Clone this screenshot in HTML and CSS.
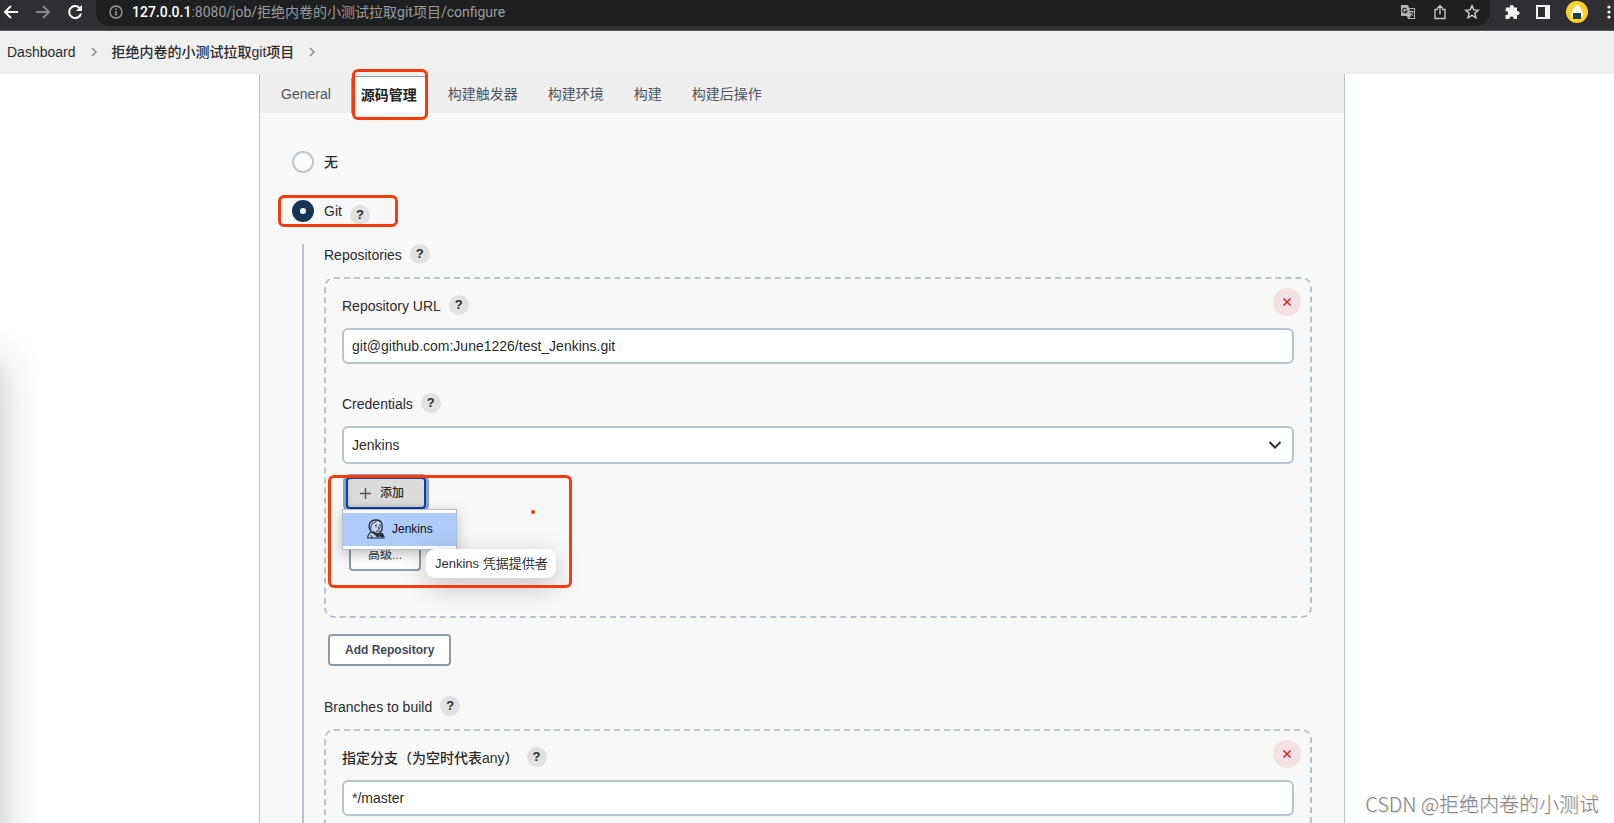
FILE: index.html
```html
<!DOCTYPE html>
<html lang="zh-CN">
<head>
<meta charset="utf-8">
<title>拒绝内卷的小测试拉取git项目 Config [Jenkins]</title>
<link rel="stylesheet" href="styles.css">
</head>
<body>
<header class="browser">
  <div class="nav">
    <button class="tool" aria-label="Back"><svg width="16" height="16" viewBox="0 0 16 16"><path d="M15 8H2M8 2L2 8l6 6" fill="none" stroke="#fff" stroke-width="2"/></svg></button>
    <button class="tool" aria-label="Forward"><svg width="16" height="16" viewBox="0 0 16 16"><path d="M1 8h13M8 2l6 6-6 6" fill="none" stroke="#85858a" stroke-width="2"/></svg></button>
    <button class="tool" aria-label="Reload"><svg width="16" height="16" viewBox="0 0 16 16"><path d="M13 4.500A6 6 0 1 0 14 9.500" fill="none" stroke="#fff" stroke-width="2"/><path d="M15 1v6H9z" fill="#fff"/></svg></button>
  </div>
  <div class="omnibox">
    <svg width="14" height="14" viewBox="0 0 14 14"><circle cx="7" cy="7" r="6" fill="none" stroke="#9aa0a6" stroke-width="1.400"/><path d="M7 6v4.500M7 3.500v1.500" stroke="#9aa0a6" stroke-width="1.500"/></svg>
    <span class="url"><b>127.0.0.1</b>:8080/job/拒绝内卷的小测试拉取git项目/configure</span>
    <div class="page-actions">
      <button class="tool" aria-label="Translate"><svg width="16" height="16" viewBox="0 0 16 16"><path d="M1 1h7l1 3h6v11H8l-1-3H1z" fill="#b4b4b6"/><path d="M9.500 5H14v9H9l2-2z" fill="#1e1f21"/><path d="M6.500 5A2.200 2.200 0 1 0 7 7H5" fill="none" stroke="#1e1f21" stroke-width="1.200"/><path d="M9.500 7.500h4M11.500 6.500v1M13 7.500c-.5 2-2 3.500-3 4M10.500 9l2.500 3" fill="none" stroke="#b4b4b6"/></svg></button>
      <button class="tool" aria-label="Share"><svg width="16" height="16" viewBox="0 0 16 16"><path d="M6 5.500H3v9h10v-9h-3M8 10.500V1.500M5 4.500l3-3 3 3" fill="none" stroke="#c2c2c4" stroke-width="1.400"/></svg></button>
      <button class="tool" aria-label="Bookmark"><svg width="16" height="16" viewBox="0 0 16 16"><path d="M8 1.700l1.800 4.200 4.600.4-3.500 3 1.100 4.500L8 11.400l-4 2.400 1.100-4.500-3.500-3 4.600-.4z" fill="none" stroke="#d0d0d2" stroke-width="1.400"/></svg></button>
    </div>
  </div>
  <div class="extras">
    <button class="tool" aria-label="Extensions"><svg width="16" height="16" viewBox="0 0 16 16"><path d="M2 3.500h4a2 2 0 1 1 3.800 0H13v3.700a2 2 0 1 1 0 3.800v4H9.500a2 2 0 1 0-3.800 0H1.500v-4a2 2 0 1 0 0-3.800z" fill="#f4f4f5"/></svg></button>
    <button class="tool" aria-label="Side panel"><svg width="16" height="16" viewBox="0 0 16 16"><path d="M1 1h14v14H1zM3 3v10h7V3z" fill="#f4f4f5" fill-rule="evenodd"/></svg></button>
    <button class="tool" aria-label="Profile"><svg width="22" height="22" viewBox="0 0 22 22"><circle cx="11" cy="11" r="11" fill="#fdd22b"/><path d="M11 4c1.500 0 2.300 1 3 2.500l2.700 5.500c1 2-.2 4-2 4H7.300c-1.800 0-3-2-2-4L8 6.500C8.700 5 9.500 4 11 4z" fill="#fff"/><path d="M7 12h8v6H7z" fill="#1d4440"/></svg></button>
    <button class="tool" aria-label="Menu"><svg width="16" height="16" viewBox="0 0 16 16"><g fill="#f4f4f5"><circle cx="8" cy="3" r="1.600"/><circle cx="8" cy="8" r="1.600"/><circle cx="8" cy="13" r="1.600"/></g></svg></button>
  </div>
</header>

<nav class="breadcrumbs" aria-label="Breadcrumb">
  <a href="#">Dashboard</a>
  <svg width="8" height="12" viewBox="0 0 8 12"><path d="M2 2l4 4-4 4" fill="none" stroke="#8c8c8c" stroke-width="1.500"/></svg>
  <a href="#">拒绝内卷的小测试拉取git项目</a>
  <svg width="8" height="12" viewBox="0 0 8 12"><path d="M2 2l4 4-4 4" fill="none" stroke="#8c8c8c" stroke-width="1.500"/></svg>
</nav>

<main class="page">
  <div class="edge-shadow"></div>
  <div class="panel">
    <nav class="tabs">
      <a class="tab" href="#general">General</a>
      <a class="tab active" href="#scm">源码管理<span class="mark mark-tab"></span></a>
      <a class="tab" href="#triggers">构建触发器</a>
      <a class="tab" href="#env">构建环境</a>
      <a class="tab" href="#build">构建</a>
      <a class="tab" href="#post">构建后操作</a>
    </nav>

    <form class="config" id="scm">
      <div class="choice">
        <input type="radio" name="scm" id="scm-none"><label for="scm-none">无</label>
      </div>
      <div class="choice">
        <input type="radio" name="scm" id="scm-git" checked><label for="scm-git">Git</label>
        <button type="button" class="help help-low" aria-label="Help: Git">?</button>
        <span class="mark mark-git"></span>
      </div>

      <section class="git">
        <div class="caption"><span>Repositories</span><button type="button" class="help" aria-label="Help: Repositories">?</button></div>
        <div class="chunk">
          <button type="button" class="delete" aria-label="Delete repository"><svg width="10" height="10" viewBox="0 0 10 10"><path d="M1.500 1.500l7 7M8.500 1.500l-7 7" stroke="#d8232a" stroke-width="1.500"/></svg></button>
          <div class="field">
            <div class="caption"><label for="repo-url">Repository URL</label><button type="button" class="help" aria-label="Help: Repository URL">?</button></div>
            <input class="text" type="text" id="repo-url" value="git@github.com:June1226/test_Jenkins.git">
          </div>
          <div class="field">
            <div class="caption"><label for="credentials">Credentials</label><button type="button" class="help" aria-label="Help: Credentials">?</button></div>
            <div class="select-wrap">
              <select id="credentials"><option>Jenkins</option></select>
              <svg class="chevron" width="14" height="10" viewBox="0 0 14 10"><path d="M1.500 2L7 7.500 12.500 2" fill="none" stroke="#333" stroke-width="2"/></svg>
            </div>
          </div>
          <div class="credential-actions">
            <button type="button" class="add"><svg width="11" height="11" viewBox="0 0 11 11"><path d="M5.500 0v11M0 5.500h11" stroke="#555" stroke-width="1.500"/></svg>添加</button>
            <div class="menu">
              <button type="button" class="menu-item">
                <svg width="18" height="20" viewBox="0 0 18 20"><path d="M4.500 13C2.500 11 1.500 8 2.500 5 3.500 2 6 1 9 1s5.500 1.500 6 4.500c.6 3.500 0 7-2.500 8.500-2 1.200-5 .5-6.500-1.500" fill="#c3d6f3" stroke="#222c3c" stroke-width="1.300"/><path d="M3 8c1.500-.5 2-2 2-3.500C7 4 9 3 9.500 2M4.500 8.500c-1.500 0-1.500 2 .3 2.500M8 6.500l2-.5M12 6l2 .4M11.500 7.500l1 2.500-1.500.2M9 12c1.500.5 2.500.3 3.500-.3M8.500 8h1M13 8h1" fill="none" stroke="#222c3c"/><path d="M5 13c-2 .5-4 2-4.400 6H17c0-2.500-1-4-3.500-5l-4 2.500z" fill="#b9cdec" stroke="#222c3c" stroke-width="1.200"/><path d="M10 15l2.500 1.200 3-1.700v3.500l-3-1-2.500 1.200zM3.500 16l2 3" fill="#222c3c" stroke="#222c3c"/></svg>
                Jenkins
              </button>
            </div>
            <button type="button" class="btn advanced">高级...</button>
            <div class="tooltip" role="tooltip">Jenkins 凭据提供者</div>
            <span class="mark mark-add"></span>
            <span class="mark-dot"></span>
          </div>
        </div>
        <button type="button" class="btn add-repo">Add Repository</button>

        <div class="caption"><span>Branches to build</span><button type="button" class="help" aria-label="Help: Branches to build">?</button></div>
        <div class="chunk">
          <button type="button" class="delete" aria-label="Delete branch"><svg width="10" height="10" viewBox="0 0 10 10"><path d="M1.500 1.500l7 7M8.500 1.500l-7 7" stroke="#d8232a" stroke-width="1.500"/></svg></button>
          <div class="field">
            <div class="caption"><label for="branch">指定分支（为空时代表any）</label><button type="button" class="help" aria-label="Help: branch">?</button></div>
            <input class="text" type="text" id="branch" value="*/master">
          </div>
        </div>
      </section>
    </form>
  </div>
  <div class="watermark">CSDN @拒绝内卷的小测试</div>
</main>
</body>
</html>
```
FILE: styles.css
```css
* { box-sizing: border-box; }

body {
  margin: 0;
  height: 100vh;
  overflow: hidden;
  display: flex;
  flex-direction: column;
  background: #fff;
  color: #2b2b2b;
  font: 14px/20px "Liberation Sans", "Noto Sans CJK SC", sans-serif;
}

button, input, select { font: inherit; color: inherit; margin: 0; }
button { cursor: pointer; }
a { color: inherit; text-decoration: none; }
svg { display: block; flex: none; }

/* Browser toolbar */
.browser {
  flex: none;
  height: 31px;
  display: flex;
  align-items: flex-start;
  background: #2f2e33;
  border-bottom: 1px solid #59585d;
}
.tool { display: flex; align-items: center; height: 24px; padding: 0; border: 0; background: none; }
.nav { display: flex; gap: 16px; padding: 0 13px 0 3px; }
.omnibox {
  flex: 1;
  display: flex;
  align-items: center;
  gap: 9px;
  height: 26px;
  padding: 0 10px 2px 13px;
  background: #1e1f21;
  border-radius: 0 0 14px 14px;
}
.url { flex: 1; color: #9a9b9e; font-family: Roboto, "Noto Sans CJK SC", sans-serif; }
.url b { color: #fff; font-weight: 500; }
.page-actions { display: flex; gap: 16px; }
.extras { display: flex; align-items: center; gap: 15px; padding-left: 14px; margin-right: -3px; }
.extras .tool { min-width: 16px; }
.extras .tool:last-child { margin-left: -2px; }

/* Breadcrumbs */
.breadcrumbs {
  flex: none;
  height: 43px;
  display: flex;
  align-items: center;
  gap: 14px;
  padding: 0 7px 2px;
  background: #f0f0f0;
  font-weight: 500;
}

/* Page */
.page { position: relative; flex: 1; min-height: 0; padding: 0 269px 0 259px; }
.edge-shadow {
  position: absolute;
  left: -120px;
  top: 288px;
  bottom: -80px;
  width: 120px;
  box-shadow: 0 0 40px rgba(0, 0, 0, 0.25);
}
.panel {
  min-height: 100%;
  background: #f8f8f8;
  border: solid #b9c3cc;
  border-width: 0 1px;
}
.tabs { display: flex; height: 39px; padding-left: 6px; background: #efefef; color: #4d545d; }
.tab { padding: 10px 15px; }
.tab.active {
  position: relative;
  margin: 2px 6px 0 5px;
  padding: 8px 9px;
  background: #fff;
  border: solid #8f9ba6;
  border-width: 1px 1px 0;
  border-radius: 4px 4px 0 0;
  color: #222;
  font-weight: 700;
}

/* Form */
.config { padding: 38px 32px 0; }
.choice { position: relative; display: flex; align-items: center; height: 22px; font-weight: 500; }
.choice + .choice { margin-top: 27px; }
.choice input {
  appearance: none;
  width: 22px;
  height: 22px;
  margin-right: 10px;
  border: 2px solid #bfc9d1;
  border-radius: 50%;
  background: #fcfcfc;
}
.choice input:checked { border: 8px solid #143654; background: #fff; }
.help {
  width: 20px;
  height: 20px;
  padding: 0;
  border: 0;
  border-radius: 50%;
  background: #e1e1e1;
  font-size: 13px;
  font-weight: 700;
}
.help-low { margin: 8px 0 0 8px; }
.git { margin: 22px 0 0 10px; padding: 0 0 40px 20px; border-left: 2px solid #b9c3cc; }
.caption { display: flex; gap: 8px; height: 20px; margin-bottom: 13px; font-weight: 500; line-height: 22px; }
.caption .help { line-height: 20px; }
.chunk { position: relative; padding: 16px 16px 45px; border: 2px dashed #b9c3cc; border-radius: 10px; }
.field + .field { margin-top: 29px; }
.delete {
  position: absolute;
  top: 9px;
  right: 9px;
  display: flex;
  align-items: center;
  justify-content: center;
  width: 28px;
  height: 28px;
  padding: 0;
  border: 0;
  border-radius: 50%;
  background: #f3e1e3;
}
.text, select {
  display: block;
  width: 100%;
  height: 36px;
  padding: 0 8px;
  border: 2px solid #b9c3cc;
  border-radius: 6px;
  background: #fff;
}
select { appearance: none; height: 38px; }
.select-wrap { position: relative; }
.chevron { position: absolute; right: 12px; top: 14px; pointer-events: none; }

/* Buttons */
.btn {
  height: 32px;
  padding: 0 15px;
  border: 2px solid #8f9ba6;
  border-radius: 4px;
  background: #fff;
  color: #434a54;
  font-size: 12px;
  font-weight: 700;
}
.add-repo { display: block; margin: 16px 0 30px 4px; }
.credential-actions {
  position: relative;
  display: flex;
  flex-direction: column;
  align-items: flex-start;
  gap: 30px;
  margin-top: 13px;
  padding-left: 4px;
}
.add {
  display: flex;
  align-items: center;
  gap: 9px;
  width: 80px;
  height: 32px;
  padding: 0 12px;
  border: 2px solid #123c9e;
  border-radius: 4px;
  background: #dcdcdc;
  box-shadow: 0 0 0 3px #7fa6c6, inset 3px -3px 2px #cfcfcf;
  font-size: 12px;
  font-weight: 500;
}
.advanced { margin-left: 3px; padding: 0 17px; font-weight: 500; }
.menu {
  position: absolute;
  left: 0;
  top: 32px;
  width: 115px;
  padding: 3px 0;
  background: #fff;
  border: 1px solid #b4bec7;
  box-shadow: 0 4px 12px rgba(0, 0, 0, 0.25);
}
.menu-item {
  display: flex;
  align-items: center;
  gap: 7px;
  width: 100%;
  height: 33px;
  padding: 0 24px 2px;
  border: 0;
  background: #adccfb;
  color: #111;
  font-size: 12px;
}
.tooltip {
  position: absolute;
  left: 84px;
  top: 72px;
  padding: 5px 8px 4px 9px;
  border-radius: 9px;
  background: #fff;
  box-shadow: 0 8px 28px rgba(0, 0, 0, 0.22);
  color: #333;
  font-size: 13px;
  white-space: nowrap;
}

/* Red annotations */
.mark { position: absolute; border: 3px solid #f73c0c; border-radius: 6px; pointer-events: none; }
.mark-tab { left: 0; right: -2px; top: -8px; bottom: -7px; }
.mark-git { left: -14px; top: -5px; width: 120px; height: 32px; }
.mark-add { left: -14px; top: -2px; width: 244px; height: 113px; }
.mark-dot { position: absolute; left: 189px; top: 33px; width: 4px; height: 4px; border-radius: 50%; background: #f73c0c; }

.watermark {
  position: absolute;
  right: 15px;
  bottom: 5px;
  color: #858585;
  font: 300 20px/28px "Noto Sans CJK SC", sans-serif;
  text-shadow: 1px 1px 1px #ddd;
}
```
